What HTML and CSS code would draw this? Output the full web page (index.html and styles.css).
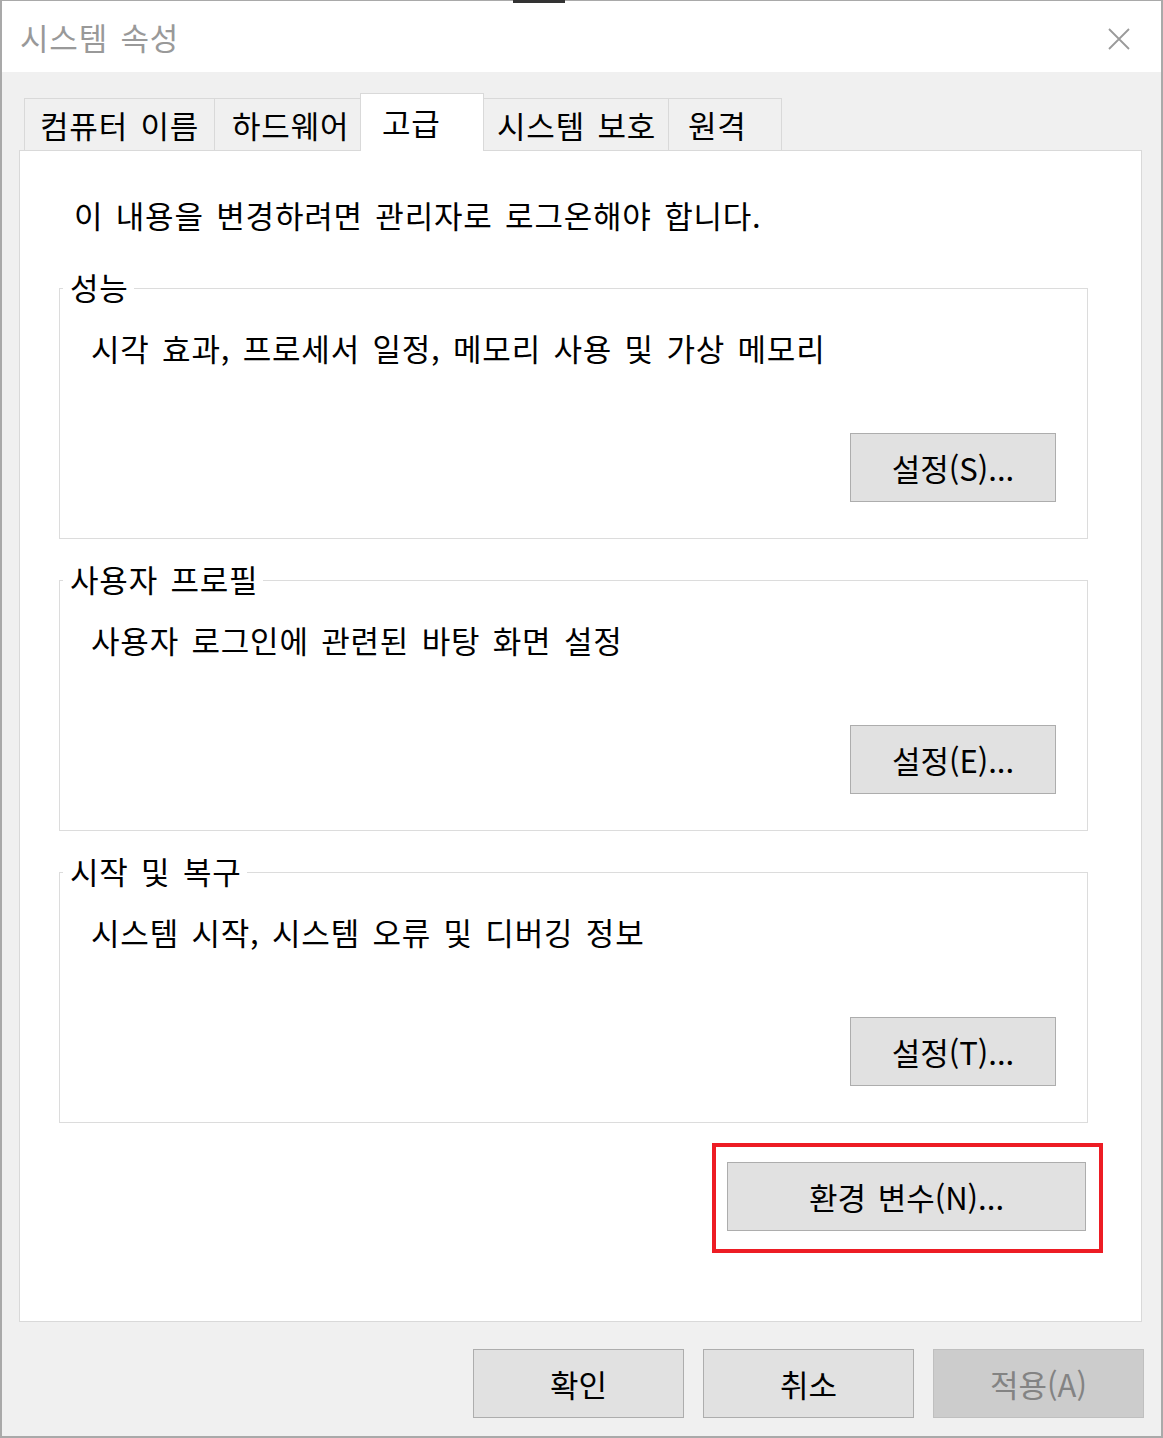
FILE: index.html
```html
<!DOCTYPE html>
<html lang="ko">
<head>
<meta charset="utf-8">
<title>시스템 속성</title>
<link rel="stylesheet" href="styles.css">
</head>
<body>
<div class="window">
  <div class="artifact"></div>
  <div class="titlebar">
    <span class="title">시스템 속성</span>
    <svg class="close" width="22" height="22" viewBox="0 0 22 22"><path d="M1 1L21 21M21 1L1 21" stroke="#9a9a9a" stroke-width="1.8" fill="none"/></svg>
  </div>
  <div class="body">
    <div class="tabs">
      <div class="tab t1">컴퓨터 이름</div>
      <div class="tab t2">하드웨어</div>
      <div class="tab t3 selected">고급</div>
      <div class="tab t4">시스템 보호</div>
      <div class="tab t5">원격</div>
    </div>
    <div class="panel">
      <p class="intro">이 내용을 변경하려면 관리자로 로그온해야 합니다.</p>
      <div class="group first">
        <span class="legend">성능</span>
        <p class="desc">시각 효과, 프로세서 일정, 메모리 사용 및 가상 메모리</p>
        <div class="group-actions"><button class="btn">설정(S)...</button></div>
      </div>
      <div class="group">
        <span class="legend">사용자 프로필</span>
        <p class="desc">사용자 로그인에 관련된 바탕 화면 설정</p>
        <div class="group-actions"><button class="btn">설정(E)...</button></div>
      </div>
      <div class="group">
        <span class="legend">시작 및 복구</span>
        <p class="desc">시스템 시작, 시스템 오류 및 디버깅 정보</p>
        <div class="group-actions"><button class="btn">설정(T)...</button></div>
      </div>
      <div class="env-row">
        <div class="highlight"><button class="btn env">환경 변수(N)...</button></div>
      </div>
    </div>
    <div class="footer">
      <button class="btn wide">확인</button>
      <button class="btn wide">취소</button>
      <button class="btn wide disabled">적용(A)</button>
    </div>
  </div>
</div>
</body>
</html>
```

FILE: styles.css
```css
* { box-sizing: border-box; }
html, body { margin: 0; padding: 0; }
body {
  width: 1163px;
  height: 1438px;
  font-family: "Noto Sans CJK KR", "Malgun Gothic", sans-serif;
  font-size: 31px;
  letter-spacing: 0.8px;
  word-spacing: 3px;
  color: #000;
  background: #f0f0f0;
  overflow: hidden;
}
.window {
  position: relative;
  width: 1163px;
  height: 1438px;
  border-style: solid;
  border-color: #a9a9a9;
  border-width: 1px 2px 2px 2px;
  background: #f0f0f0;
  display: flex;
  flex-direction: column;
}
.artifact {
  position: absolute;
  top: -1px;
  left: 511px;
  width: 52px;
  height: 3px;
  background: #333;
}
.titlebar {
  height: 71px;
  flex: none;
  background: #fff;
  display: flex;
  align-items: center;
  justify-content: space-between;
  padding-left: 18px;
  padding-right: 31px;
}
.title {
  color: #999;
  line-height: 44px;
}
.close { margin-top: 4px; }
.body { flex: 1; }
.tabs {
  display: flex;
  align-items: flex-end;
  height: 57px;
  margin-top: 21px;
  margin-left: 22px;
}
.tab {
  height: 52px;
  border: 1px solid #d9d9d9;
  border-bottom: none;
  margin-left: -1px;
  line-height: 51px;
  white-space: nowrap;
  background: #f0f0f0;
}
.tab.t1 { margin-left: 0; width: 191px; padding-left: 15px; }
.tab.t2 { width: 147px; padding-left: 17px; }
.tab.t3 { width: 124px; padding-left: 21px; }
.tab.t4 { width: 186px; padding-left: 13px; }
.tab.t5 { width: 114px; padding-left: 19px; }
.tab.selected {
  height: 58px;
  line-height: 56px;
  background: #fff;
  margin-bottom: -1px;
  position: relative;
  z-index: 1;
}
.panel {
  margin: 0 19px 0 17px;
  height: 1172px;
  background: #fff;
  border: 1px solid #d9d9d9;
  padding-left: 39px;
}
.intro {
  margin: 42px 0 0 15px;
  line-height: 44px;
}
.group {
  position: relative;
  width: 1029px;
  height: 251px;
  border: 1px solid #dcdcdc;
  margin-top: 41px;
  padding: 37px 31px 0 31px;
}
.group.first { margin-top: 51px; }
.legend {
  position: absolute;
  top: -24px;
  left: 3px;
  padding: 0 5px 0 7px;
  background: #fff;
  line-height: 44px;
  white-space: nowrap;
}
.desc {
  margin: 0;
  line-height: 44px;
}
.group-actions {
  display: flex;
  justify-content: flex-end;
  margin-top: 63px;
}
.btn {
  width: 206px;
  height: 69px;
  padding: 0;
  background: #e1e1e1;
  border: 1px solid #adadad;
  font-family: inherit;
  font-size: 31px;
  letter-spacing: 0;
  word-spacing: 3px;
  color: #000;
  line-height: 1;
}
.env-row {
  display: flex;
  justify-content: flex-end;
  margin-top: 20px;
  padding-right: 38px;
}
.highlight {
  width: 391px;
  height: 110px;
  border: 4px solid #ed1c24;
  padding: 15px 0 0 11px;
}
.btn.env { width: 359px; }
.footer {
  display: flex;
  justify-content: flex-end;
  gap: 19px;
  margin-top: 27px;
  padding-right: 17px;
}
.btn.wide { width: 211px; }
.btn.disabled {
  background: #cccccc;
  border-color: #bfbfbf;
  color: #838383;
}
```
